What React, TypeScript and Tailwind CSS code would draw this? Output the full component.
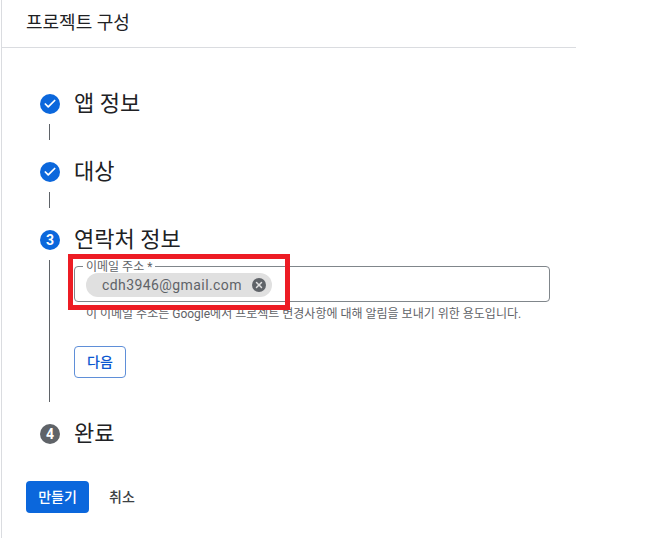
import { Check, X } from "lucide-react";

const FONT = "font-['Roboto','Noto_Sans_CJK_KR',sans-serif]";

function DoneIcon() {
  return (
    <div className="flex h-5 w-5 shrink-0 items-center justify-center rounded-full bg-[#0b67dc]">
      <Check className="h-3.5 w-3.5 text-white" strokeWidth={3} />
    </div>
  );
}

function NumIcon({ n, color }: { n: number; color: string }) {
  return (
    <div
      className={`flex h-5 w-5 shrink-0 items-center justify-center rounded-full text-[14px] font-bold text-white ${color}`}
    >
      {n}
    </div>
  );
}

function StepTitle({ icon, title }: { icon: React.ReactNode; title: string }) {
  return (
    <div className="flex h-10 items-center gap-[14px]">
      {icon}
      <span className="-mt-px text-[22px] leading-none text-[#202124]">{title}</span>
    </div>
  );
}

function ShortLine() {
  return <div className="ml-[9px] mt-0 h-4 w-px bg-[#5f6368]" />;
}

export default function App() {
  return (
    <div className={`relative h-[559px] w-[649px] bg-white ${FONT}`}>
      <div className="ml-px flex h-[538px] w-[575px] flex-col border-l border-[#dadce0]">
        <header className="flex h-[48px] shrink-0 items-center border-b border-[#dadce0] pb-[3px] pl-6 text-[18px] text-[#202124]">
          프로젝트 구성
        </header>

        <div className="flex flex-col pl-[38px] pt-9">
          <StepTitle icon={<DoneIcon />} title="앱 정보" />
          <ShortLine />
          <div className="mt-3" />
          <StepTitle icon={<DoneIcon />} title="대상" />
          <ShortLine />
          <div className="mt-3" />
          <StepTitle icon={<NumIcon n={3} color="bg-[#0b67dc]" />} title="연락처 정보" />

          <div className="ml-[9px] flex h-[142px] border-l border-[#5f6368] pl-6">
            <div className="flex w-[476px] flex-col pt-1.5">
              <div className="relative flex h-9 items-center rounded border border-[#80868b] pl-[11px]">
                <span className="absolute -top-[6px] left-2 bg-white px-[3px] text-[12px] leading-3 text-[#5f6368]">
                  이메일 주소 *
                </span>
                <div className="mt-0.5 flex h-6 w-[186px] items-center justify-between rounded-full bg-[#e0e0e0] pl-4 pr-1.5">
                  <span className="text-[14px] tracking-[0.42px] text-[#5f6368]">cdh3946@gmail.com</span>
                  <span className="flex h-[14px] w-[14px] items-center justify-center rounded-full bg-[#5f6368]">
                    <X className="h-2.5 w-2.5 text-[#e0e0e0]" strokeWidth={3.5} />
                  </span>
                </div>
              </div>
              <p className="ml-3 mt-[3px] text-[12px] leading-[18px] text-[#5f6368]">
                이 이메일 주소는 Google에서 프로젝트 변경사항에 대해 알림을 보내기 위한 용도입니다.
              </p>
              <button
                type="button"
                className="mt-[23px] h-8 w-[52px] rounded border border-[#5f8fd8] text-[14px] font-medium text-[#0b57d0]"
              >
                다음
              </button>
            </div>
          </div>
          <div className="mt-3" />
          <StepTitle icon={<NumIcon n={4} color="bg-[#5f6368]" />} title="완료" />
        </div>

        <div className="flex items-center pl-6 pt-[27px]">
          <button
            type="button"
            className="h-8 w-[63px] rounded bg-[#0b67dc] pt-px text-[14px] font-medium text-white"
          >
            만들기
          </button>
          <button type="button" className="ml-[20px] pt-px text-[14px] font-medium text-[#3c4043]">
            취소
          </button>
        </div>
      </div>

      {/* red annotation box */}
      <div className="absolute left-[68px] top-[254px] h-[56px] w-[222px] border-[5px] border-[#ed1c24]" />
    </div>
  );
}
